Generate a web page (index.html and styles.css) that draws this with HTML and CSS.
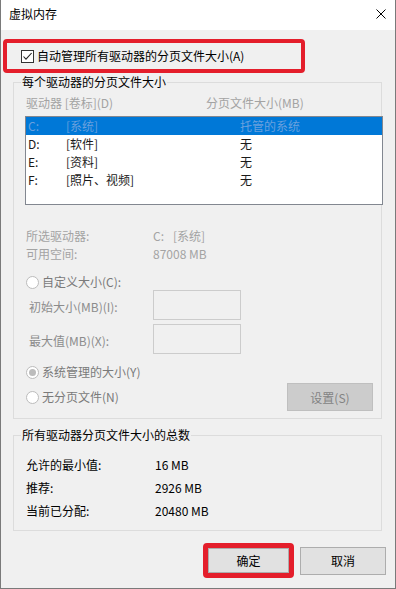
FILE: index.html
```html
<!DOCTYPE html>
<html>
<head>
  <link rel="stylesheet" href="styles.css">
</head>
<body>
  <div class="window">
    <div class="titlebar">
      <span class="title">虚拟内存</span>
      <svg class="close" width="10" height="10" viewBox="0 0 10 10">
        <path d="M0.5 0.5 L9.5 9.5 M9.5 0.5 L0.5 9.5" stroke="#000" stroke-width="1" fill="none"/>
      </svg>
    </div>

    <div class="content">
      <div class="auto-row">
        <span class="checkbox">
          <svg width="11" height="11" viewBox="0 0 11 11">
            <path d="M1.5 5.5 L4 8.2 L9.6 2" stroke="#222" stroke-width="1.1" fill="none"/>
          </svg>
        </span>
        <span>自动管理所有驱动器的分页文件大小(A)</span>
      </div>

      <fieldset class="group group-drives">
        <legend>每个驱动器的分页文件大小</legend>
        <div class="list-head">
          <span class="col-drive">驱动器 [卷标](D)</span>
          <span>分页文件大小(MB)</span>
        </div>
        <div class="drive-list">
          <div class="drive-row selected"><span>C:</span><span>[系统]</span><span>托管的系统</span></div>
          <div class="drive-row"><span>D:</span><span>[软件]</span><span>无</span></div>
          <div class="drive-row"><span>E:</span><span>[资料]</span><span>无</span></div>
          <div class="drive-row"><span>F:</span><span>[照片、视频]</span><span>无</span></div>
        </div>

        <div class="info">
          <span>所选驱动器:</span><span>C:<span class="vol">[系统]</span></span>
          <span>可用空间:</span><span>87008 MB</span>
        </div>

        <div class="radio-row radio-custom"><span class="radio"></span>自定义大小(C):</div>
        <div class="size-row">
          <span class="size-label">初始大小(MB)(I):</span>
          <span class="size-input"></span>
        </div>
        <div class="size-row size-max">
          <span class="size-label">最大值(MB)(X):</span>
          <span class="size-input"></span>
        </div>

        <div class="radio-row radio-system"><span class="radio checked"></span>系统管理的大小(Y)</div>
        <div class="bottom-row">
          <div class="radio-row"><span class="radio"></span>无分页文件(N)</div>
          <div class="set-btn">设置(S)</div>
        </div>
      </fieldset>

      <fieldset class="group group-totals">
        <legend>所有驱动器分页文件大小的总数</legend>
        <div class="totals">
          <span>允许的最小值:</span><span>16 MB</span>
          <span>推荐:</span><span>2926 MB</span>
          <span>当前已分配:</span><span>20480 MB</span>
        </div>
      </fieldset>

      <div class="actions">
        <div class="ok-wrap">
          <div class="btn ok">确定</div>
        </div>
        <div class="btn cancel">取消</div>
      </div>
    </div>
  </div>
</body>
</html>
```

FILE: styles.css
```css
* {
  box-sizing: border-box;
}

body {
  margin: 0;
  font-family: "Noto Sans CJK SC", "Microsoft YaHei", sans-serif;
  font-size: 12px;
  color: #000;
  background-color: #f0f0f0;
}

.window {
  width: 396px;
  height: 589px;
  border: 1px solid #7a7a7a;
  border-top: none;
  background-color: #f0f0f0;
}

.titlebar {
  height: 30px;
  background-color: #fff;
  display: flex;
  align-items: center;
  justify-content: space-between;
  padding: 0 9px 2px 8px;
}

.title {
  line-height: 16px;
}

.content {
  padding: 9px 0 0 2px;
}

.auto-row {
  width: 302px;
  height: 34px;
  border: 4px solid #e41e2b;
  border-radius: 4px;
  display: flex;
  align-items: center;
  padding-left: 14px;
  line-height: 16px;
}

.checkbox {
  width: 13px;
  height: 13px;
  border: 1px solid #333;
  background-color: #fff;
  display: flex;
  margin-right: 3px;
}

.group {
  margin: 1px 0 0 10px;
  width: 369px;
  padding: 0 0 7px 0;
  border: 1px solid #dcdcdc;
  min-width: 0;
}

.group legend {
  margin-left: 7px;
  padding: 0 1px;
  line-height: 16px;
}

.list-head {
  display: flex;
  margin: 5px 0 0 12px;
  line-height: 16px;
  color: #a3a3a3;
}

.col-drive {
  width: 180px;
}

.drive-list {
  margin: 5px 0 0 11px;
  width: 358px;
  height: 89px;
  border: 1px solid #828790;
  background-color: #fff;
}

.drive-row {
  display: grid;
  grid-template-columns: 38px 174px 1fr;
  height: 18px;
  line-height: 18px;
  padding-left: 2px;
  color: #1a1a1a;
}

.drive-row.selected {
  background-color: #0078d7;
  color: #6aa0dd;
}

.info {
  display: grid;
  grid-template-columns: 127px 1fr;
  line-height: 18px;
  margin: 22px 0 0 12px;
  color: #a3a3a3;
}

.vol {
  margin-left: 9px;
}

.radio-row {
  display: flex;
  align-items: center;
  line-height: 16px;
  color: #7a7a7a;
}

.radio-custom {
  margin: 11px 0 0 12px;
}

.radio-system {
  margin: 10px 0 0 12px;
}

.radio {
  width: 13px;
  height: 13px;
  border-radius: 50%;
  border: 1px solid #bcbcbc;
  background-color: #fff;
  margin-right: 3px;
  display: flex;
  align-items: center;
  justify-content: center;
}

.radio.checked::after {
  content: "";
  width: 7px;
  height: 7px;
  border-radius: 50%;
  background-color: #bcbcbc;
}

.size-row {
  display: flex;
  align-items: center;
  height: 30px;
  margin-left: 15px;
  color: #8c8c8c;
}

.size-max {
  margin-top: 4px;
}

.size-label {
  width: 124px;
  padding-top: 4px;
  line-height: 16px;
}

.size-input {
  width: 88px;
  height: 30px;
  border: 1px solid #cccccc;
  background-color: #f0f0f0;
}

.bottom-row {
  display: flex;
  align-items: center;
  justify-content: space-between;
  height: 28px;
  margin: 3px 8px 0 12px;
}

.set-btn {
  width: 86px;
  height: 28px;
  background-color: #cccccc;
  border: 1px solid #bfbfbf;
  color: #838383;
  display: flex;
  align-items: center;
  justify-content: center;
}

.group-totals {
  margin-top: 8px;
  padding-bottom: 8px;
}

.totals {
  display: grid;
  grid-template-columns: 129px 1fr;
  line-height: 23px;
  margin: 10px 0 0 12px;
}

.actions {
  display: flex;
  justify-content: flex-end;
  align-items: center;
  margin: 12px 9px 0 0;
}

.ok-wrap {
  width: 91px;
  height: 35px;
  border: 5px solid #e41e2b;
  border-radius: 4px;
  margin-right: 6px;
  display: flex;
}

.btn {
  background-color: #e1e1e1;
  border: 1px solid #adadad;
  display: flex;
  align-items: center;
  justify-content: center;
}

.ok {
  flex: 1;
}

.cancel {
  width: 86px;
  height: 28px;
}
```
